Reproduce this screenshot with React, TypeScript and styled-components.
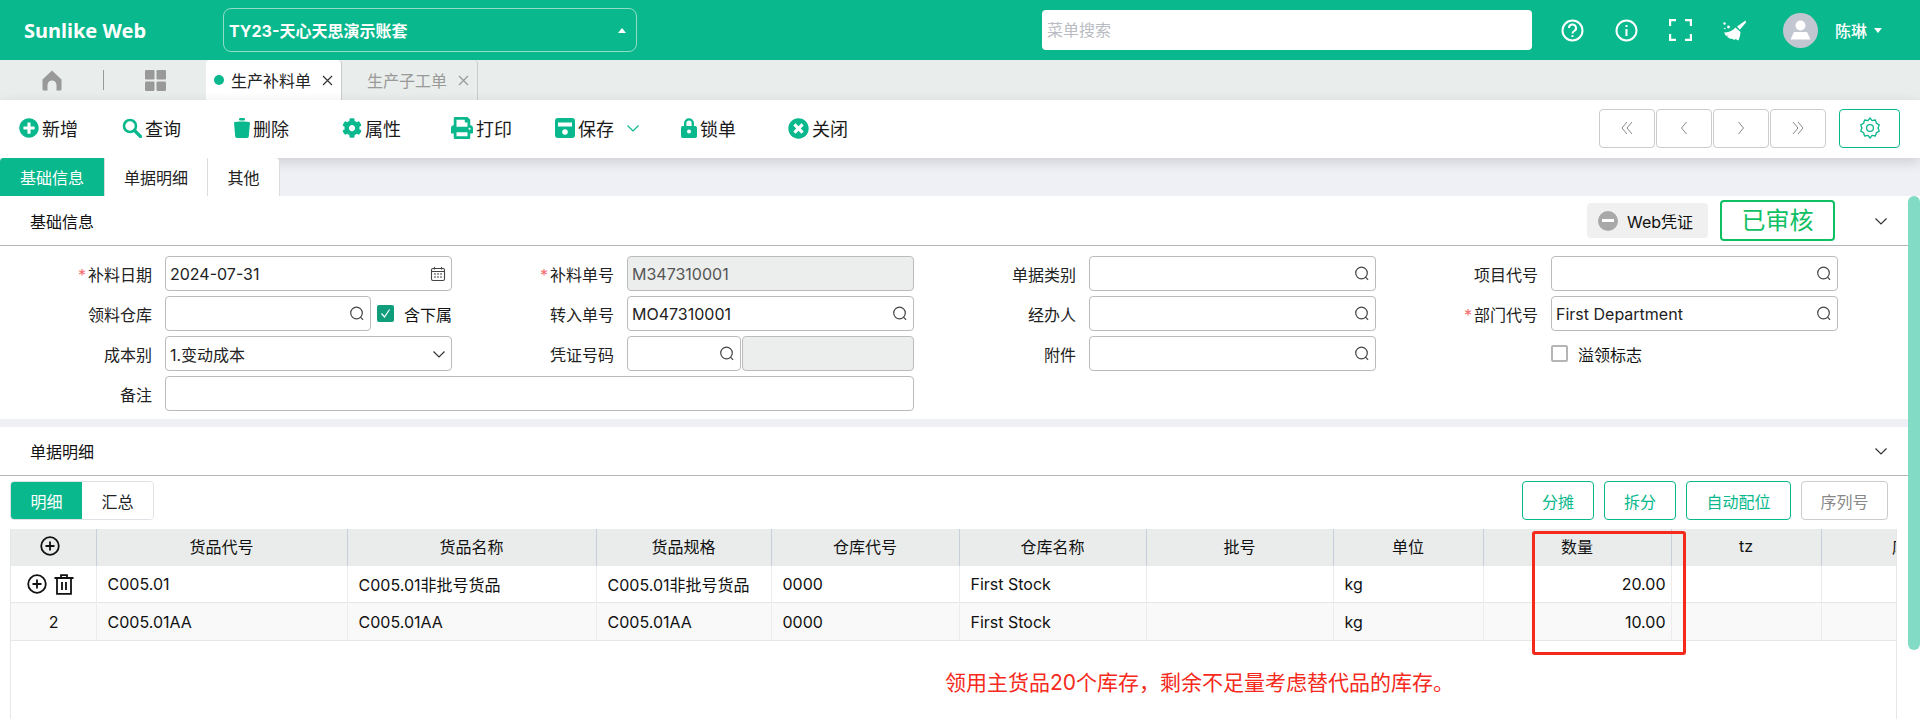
import React from "react";
import styled, { createGlobalStyle } from "styled-components";
import { FaCog, FaPlusCircle, FaPrint, FaTimesCircle } from "react-icons/fa";

const GREEN = "#09b88c";

const GlobalStyles = createGlobalStyle`
  html, body {
    margin: 0;
    padding: 0;
    background: #fff;
  }
  body {
    font-family: Inter, "Noto Sans CJK SC", sans-serif;
    font-size: 16px;
    color: #111;
  }
  * { box-sizing: border-box; }
`;

const Page = styled.div`
  position: relative;
  width: 1920px;
  height: 719px;
  overflow: hidden;
  background: #fff;
`;

const Header = styled.header`
  display: flex;
  align-items: center;
  height: 60px;
  background: ${GREEN};
  color: #fff;
`;

const Logo = styled.div`
  width: 223px;
  padding-left: 24px;
  font-family: "Noto Sans", sans-serif;
  font-size: 20px;
  font-weight: 700;
`;

const CompanySelect = styled.div`
  display: flex;
  align-items: center;
  justify-content: space-between;
  width: 414px;
  height: 44px;
  padding: 0 10px 0 5px;
  border: 1px solid #8fdcc8;
  border-radius: 8px;
  font-weight: 700;
`;

const Caret = styled.span<{ $up?: boolean }>`
  width: 0;
  height: 0;
  border-left: 4px solid transparent;
  border-right: 4px solid transparent;
  ${(p) => (p.$up ? "border-bottom: 5px solid #fff;" : "border-top: 5px solid #fff;")}
`;

const MenuSearch = styled.div`
  width: 490px;
  height: 40px;
  margin-left: 405px;
  padding-left: 5px;
  border-radius: 4px;
  background: #fff;
  color: #b9bcc2;
  line-height: 41px;
`;

const HeaderIcons = styled.div`
  display: flex;
  align-items: center;
  gap: 31px;
  margin-left: 29px;
`;

const HeaderIcon = styled.span`
  display: flex;
  width: 23px;
  height: 23px;
  align-items: center;
  justify-content: center;
`;

const Avatar = styled.span`
  width: 35px;
  height: 35px;
  margin-left: 37px;
  border-radius: 50%;
  background: #c2c6d0;
  overflow: hidden;
`;

const UserName = styled.span`
  margin: 0 7px 0 17px;
  font-size: 16px;
  font-weight: 500;
`;

const TabBar = styled.nav`
  display: flex;
  align-items: stretch;
  height: 40px;
  background: #e9edeb;
`;

const TabShortcut = styled.div`
  display: flex;
  align-items: center;
  width: 206px;
  padding-left: 42px;
`;

const TabDivider = styled.span`
  width: 1px;
  height: 20px;
  margin: 0 41px;
  background: #999;
`;

const PageTab = styled.div<{ $active?: boolean }>`
  display: flex;
  align-items: center;
  width: 136px;
  padding-left: ${(p) => (p.$active ? 8 : 25)}px;
  border-right: 1px solid #c9cccb;
  border-radius: 4px 4px 0 0;
  background: ${(p) => (p.$active ? "#fff" : "transparent")};
  color: ${(p) => (p.$active ? "#222" : "#999")};
`;

const TabDot = styled.span`
  width: 10px;
  height: 10px;
  margin-right: 7px;
  border-radius: 50%;
  background: ${GREEN};
`;

const TabClose = styled.svg`
  margin-left: 11px;
`;

const Toolbar = styled.div`
  position: relative;
  z-index: 1;
  display: flex;
  align-items: center;
  height: 58px;
  padding: 0 20px 2px 19px;
  background: #fff;
  box-shadow: 0 4px 12px rgba(0, 0, 0, 0.14);
`;

const ToolButton = styled.div<{ $width: number }>`
  display: flex;
  align-items: center;
  width: ${(p) => p.$width}px;
  gap: 3px;
  font-size: 18px;
  color: #1a1a1a;
  svg {
    color: ${GREEN};
    flex: none;
  }
`;

const DropMark = styled.span`
  display: flex;
  margin-left: 9px;
`;

const NavGroup = styled.div`
  display: flex;
  align-items: center;
  margin-left: auto;
  gap: 1px;
`;

const NavButton = styled.div`
  display: flex;
  align-items: center;
  justify-content: center;
  width: 56px;
  height: 39px;
  border: 1px solid #ccc;
  border-radius: 4px;
  color: #8a8a8a;
`;

const GearButton = styled.div`
  display: flex;
  align-items: center;
  justify-content: center;
  width: 61px;
  height: 39px;
  margin-left: 13px;
  border: 1px solid ${GREEN};
  border-radius: 4px;
  color: ${GREEN};
`;

const SubTabs = styled.div`
  display: flex;
  height: 38px;
  background: #eff0f5;
`;

const SubTab = styled.div<{ $active?: boolean; $width: number }>`
  position: relative;
  z-index: 2;
  display: flex;
  align-items: center;
  justify-content: center;
  width: ${(p) => p.$width}px;
  border-right: 1px solid #dcdcdc;
  border-radius: ${(p) => (p.$active ? "4px 0 0 0" : "0")};
  background: ${(p) => (p.$active ? GREEN : "#fff")};
  color: ${(p) => (p.$active ? "#fff" : "#222")};
  &:last-child {
    border-radius: 0 4px 0 0;
  }
`;

const SectionHead = styled.div<{ $height: number }>`
  display: flex;
  align-items: center;
  height: ${(p) => p.$height}px;
  padding: 0 32px 0 30px;
  border-bottom: 1px solid #b5b5b5;
  background: #fff;
`;

const SectionActions = styled.div`
  display: flex;
  align-items: center;
  margin-left: auto;
`;

const VoucherButton = styled.div`
  display: flex;
  align-items: center;
  gap: 9px;
  width: 121px;
  height: 35px;
  padding-left: 11px;
  border-radius: 4px;
  background: #f0f0f0;
`;

const VoucherDot = styled.span`
  display: flex;
  align-items: center;
  justify-content: center;
  width: 20px;
  height: 20px;
  border-radius: 50%;
  background: #a8a8a8;
  &::after {
    content: "";
    width: 12px;
    height: 3px;
    background: #fff;
  }
`;

const StatusStamp = styled.div`
  width: 115px;
  height: 41px;
  margin: 0 39px 0 12px;
  border: 2px solid #0fc063;
  border-radius: 4px;
  color: #0fc063;
  font-size: 24px;
  line-height: 37px;
  text-align: center;
`;

const FormGrid = styled.div`
  display: grid;
  grid-template-columns: repeat(4, 153px 287px);
  column-gap: 11px;
  grid-auto-rows: 35px;
  row-gap: 5px;
  padding: 10px 0 8px 1px;
`;

const Label = styled.label<{ $required?: boolean }>`
  align-self: center;
  padding-right: 2px;
  text-align: right;
  color: #222;
  white-space: nowrap;
  ${(p) =>
    p.$required
      ? `&::before { content: "*"; margin-right: 2px; color: #f56c6c; }`
      : ""}
`;

const Field = styled.div<{ $disabled?: boolean; $grow?: boolean }>`
  display: flex;
  align-items: center;
  justify-content: space-between;
  height: 35px;
  padding: 0 5px 0 4px;
  ${(p) => (p.$grow ? "flex: 1;" : "")}
  border: 1px solid #bbb;
  border-radius: 4px;
  background: ${(p) => (p.$disabled ? "#eceeed" : "#fff")};
  color: ${(p) => (p.$disabled ? "#555" : "#222")};
  white-space: nowrap;
`;

const WideField = styled(Field)`
  grid-column: span 3;
`;

const FieldGroup = styled.div`
  display: flex;
  align-items: center;
`;

const Check = styled.span<{ $checked?: boolean }>`
  display: flex;
  flex: none;
  align-items: center;
  justify-content: center;
  width: 17px;
  height: 17px;
  margin-left: ${(p) => (p.$checked ? 6 : 0)}px;
  border-radius: 2px;
  border: ${(p) => (p.$checked ? "none" : "2px solid #b5b5b5")};
  background: ${(p) => (p.$checked ? "#0f9d7c" : "#fff")};
`;

const CheckLabel = styled.span`
  margin-left: 10px;
  white-space: nowrap;
`;

const VoucherCode = styled(Field)`
  width: 114px;
  margin-right: 1px;
`;

const SectionGap = styled.div`
  height: 8px;
  background: #eff0f5;
`;

const DetailBar = styled.div`
  display: flex;
  align-items: flex-start;
  height: 53px;
  padding: 5px 32px 0 10px;
`;

const Segment = styled.div`
  display: flex;
  height: 39px;
  border: 1px solid #dfe1e6;
  border-radius: 4px;
  overflow: hidden;
`;

const SegmentItem = styled.div<{ $active?: boolean }>`
  display: flex;
  align-items: center;
  justify-content: center;
  width: 71px;
  background: ${(p) => (p.$active ? GREEN : "#fff")};
  color: ${(p) => (p.$active ? "#fff" : "#222")};
`;

const DetailActions = styled.div`
  display: flex;
  gap: 10px;
  margin-left: auto;
`;

const OutlineButton = styled.div<{ $muted?: boolean; $width: number }>`
  display: flex;
  align-items: center;
  justify-content: center;
  width: ${(p) => p.$width}px;
  height: 39px;
  border: 1px solid ${(p) => (p.$muted ? "#ccc" : GREEN)};
  border-radius: 4px;
  color: ${(p) => (p.$muted ? "#888" : GREEN)};
`;

const GridWrap = styled.div`
  width: 1887px;
  height: 190px;
  margin-left: 10px;
  border-left: 1px solid #e6e6e6;
  border-right: 1px solid #e6e6e6;
  overflow: hidden;
`;

const Table = styled.table`
  width: 1968px;
  table-layout: fixed;
  border-collapse: collapse;
`;

const HeadCell = styled.th`
  height: 37px;
  padding: 0 0 3px;
  border-right: 1px solid #c8cfdc;
  background: #e9eceb;
  font-weight: 400;
  text-align: center;
  white-space: nowrap;
`;

const AddHead = styled.div`
  display: flex;
  justify-content: center;
  padding-right: 6px;
`;

const Row = styled.tr<{ $striped?: boolean }>`
  background: ${(p) => (p.$striped ? "#f9f9f9" : "#fff")};
  border-bottom: 1px solid #e6e6e6;
`;

const Cell = styled.td<{ $align?: string; $height: number }>`
  height: ${(p) => p.$height}px;
  padding: 1px ${(p) => (p.$align === "right" ? 5 : 10)}px 0 11px;
  border-right: 1px solid #ececec;
  text-align: ${(p) => p.$align || "left"};
  white-space: nowrap;
`;

const RowActions = styled.div`
  display: flex;
  align-items: center;
  justify-content: center;
  gap: 7px;
  margin-left: -7px;
`;

const Highlight = styled.div`
  position: absolute;
  left: 1532px;
  top: 531px;
  width: 154px;
  height: 124px;
  border: 3px solid #f5291c;
  border-radius: 3px;
`;

const Note = styled.div`
  position: absolute;
  left: 945px;
  top: 668px;
  color: #f5291c;
  font-size: 21px;
  line-height: 30px;
  white-space: nowrap;
`;

const ScrollThumb = styled.div`
  position: absolute;
  right: 0;
  top: 196px;
  width: 12px;
  height: 454px;
  border-radius: 6px;
  background: #82dcc5;
`;

const CloseMark = ({ color }: { color: string }) => (
  <TabClose width="11" height="11" viewBox="0 0 11 11" fill="none" stroke={color} strokeWidth="1.2">
    <path d="M1 1l9 9M10 1l-9 9" />
  </TabClose>
);

const SearchIcon = () => (
  <svg width="16" height="16" viewBox="0 0 16 16" fill="none" stroke="#444" strokeWidth="1.2">
    <circle cx="7.5" cy="7" r="5.8" />
    <path d="M11.5 11.2l2.6 2.6" />
  </svg>
);

const CalendarIcon = () => (
  <svg width="16" height="16" viewBox="0 0 16 16" fill="none" stroke="#444" strokeWidth="1.1">
    <rect x="1.5" y="2.5" width="13" height="12" rx="1.5" />
    <path d="M1.5 5.5h13M4.5 1v2.5M11.5 1v2.5" />
    <path d="M4 8h2M7 8h2M10 8h2M4 11h2M7 11h2M10 11h2" />
  </svg>
);

const Chevron = ({ size = 14, color = "#333" }: { size?: number; color?: string }) => (
  <svg width={size} height={size} viewBox="0 0 14 14" fill="none" stroke={color} strokeWidth="1.2">
    <path d="M1.5 4.5L7 10l5.5-5.5" />
  </svg>
);

const HomeIcon = () => (
  <svg width="20" height="21" viewBox="0 0 20 21" fill="#999">
    <path d="M10 0.5L0.5 9.5V19a1.5 1.5 0 0 0 1.5 1.5h3.5V15a4.5 4.5 0 0 1 9 0v5.5H18a1.5 1.5 0 0 0 1.5-1.5V9.5z" />
  </svg>
);

const AppsIcon = () => (
  <svg width="21" height="21" viewBox="0 0 21 21" fill="#999">
    <rect width="9.5" height="9.5" rx="1.2" />
    <rect x="11.5" width="9.5" height="9.5" rx="1.2" />
    <rect y="11.5" width="9.5" height="9.5" rx="1.2" />
    <rect x="11.5" y="11.5" width="9.5" height="9.5" rx="1.2" />
  </svg>
);

const MagnifierIcon = () => (
  <svg width="20" height="20" viewBox="0 0 20 20" fill="none" stroke="currentColor">
    <circle cx="8" cy="8" r="6" strokeWidth="2.6" />
    <path d="M12.500 12.500l6 6" strokeWidth="3.2" strokeLinecap="round" />
  </svg>
);

const TrashIcon = () => (
  <svg width="16" height="20" viewBox="0 0 16 20" fill="currentColor">
    <rect x="5" width="6" height="2.4" rx="1.2" />
    <path d="M0 4.500C2 3.200 14 3.200 16 4.500l-1.200 13.800A1.800 1.800 0 0 1 13 20H3a1.800 1.800 0 0 1-1.800-1.700z" />
  </svg>
);

const SaveIcon = () => (
  <svg width="20" height="20" viewBox="0 0 20 20">
    <rect width="20" height="20" rx="3" fill="currentColor" />
    <rect x="3" y="4.500" width="14" height="4" fill="#fff" />
    <circle cx="10" cy="14" r="2.800" fill="#fff" />
  </svg>
);

const LockIcon = () => (
  <svg width="16" height="20" viewBox="0 0 16 20" fill="currentColor">
    <path
      fillRule="evenodd"
      d="M3 8V5.2a5 5 0 0 1 10 0V8h1.2A1.8 1.8 0 0 1 16 9.800v8.400a1.800 1.800 0 0 1-1.800 1.800H1.800A1.800 1.800 0 0 1 0 18.200V9.800A1.800 1.800 0 0 1 1.800 8zm2.400 0h5.200V5.200a2.600 2.600 0 0 0-5.200 0zM8 11.500a2 2 0 1 0 0 4 2 2 0 0 0 0-4z"
    />
  </svg>
);

const GearOutline = () => (
  <svg width="20" height="22" viewBox="0 0 20 22" fill="none" stroke="currentColor" strokeWidth="1.3" strokeLinejoin="round">
    <path d="M10 1l2 2.600 3.400-.6 1 3.200 2.800 1.700L18 11l1.200 3.100-2.800 1.700-1 3.200-3.400-.6L10 21l-2-2.600-3.400.6-1-3.200-2.800-1.700L2 11 .8 7.900l2.800-1.700 1-3.200 3.400.6z" />
    <circle cx="10" cy="11" r="3.400" />
  </svg>
);

const Pager = ({ d }: { d: string }) => (
  <svg width="16" height="16" viewBox="0 0 16 16" fill="none" stroke="currentColor" strokeWidth="1">
    <path d={d} />
  </svg>
);

const PlusCircleOutline = () => (
  <svg width="20" height="20" viewBox="0 0 20 20" fill="none" stroke="#111" strokeWidth="1.8">
    <circle cx="10" cy="10" r="8.800" />
    <path d="M10 5.500v9M5.500 10h9" />
  </svg>
);

const TrashOutline = () => (
  <svg width="20" height="21" viewBox="0 0 20 21" fill="none" stroke="#111" strokeWidth="1.8">
    <path d="M0.500 4h19M7 4V1.200h6V4M3 4v15.800h14V4" />
    <path d="M8 8v8M12 8v8" />
  </svg>
);

const HelpIcon = () => (
  <svg width="23" height="23" viewBox="0 0 23 23" fill="none" stroke="#fff" strokeWidth="2">
    <circle cx="11.500" cy="11.500" r="10" />
    <path d="M8 9a3.500 3.500 0 1 1 5.200 3c-1.200.7-1.700 1.300-1.700 2.500" />
    <path d="M11.500 16.200v1.800" />
  </svg>
);

const InfoIcon = () => (
  <svg width="23" height="23" viewBox="0 0 23 23" fill="none" stroke="#fff" strokeWidth="2">
    <circle cx="11.500" cy="11.500" r="10" />
    <path d="M11.500 10v7M11.500 6v2" />
  </svg>
);

const FullscreenIcon = () => (
  <svg width="23" height="22" viewBox="0 0 23 22" fill="none" stroke="#fff" strokeWidth="2.200">
    <path d="M1.100 7V1.100H7M16 1.100h5.900V7M21.900 15v5.900H16M7 20.900H1.100V15" />
  </svg>
);

const BroomIcon = () => (
  <svg width="23" height="21" viewBox="0 0 23 21" fill="#fff">
    <path d="M22.500 0.500L14 6.500l2.800 3.200L23 2.500z" />
    <path d="M12.500 7.500l5 4.500-0.500 4-1.500 4.500-3-1.500-1 1-3-1.500-0.500 0.500L4 17l1.500-1.500-2.500 0.500L1 12.500c4.500 0 8.500-1.500 11.500-5z" />
    <circle cx="1.500" cy="3.500" r="1.200" />
    <circle cx="5.500" cy="7" r="1.400" />
    <circle cx="1.800" cy="8.500" r="0.800" />
  </svg>
);

const AvatarFigure = () => (
  <svg width="35" height="35" viewBox="0 0 35 35" fill="#fff">
    <circle cx="17.500" cy="12.500" r="5" />
    <path d="M7.500 26.500l3.500-7.500h13l3.500 7.500z" />
  </svg>
);

const tools = [
  { label: "新增", width: 103, icon: <FaPlusCircle size={20} /> },
  { label: "查询", width: 112, icon: <MagnifierIcon /> },
  { label: "删除", width: 108, icon: <TrashIcon /> },
  { label: "属性", width: 109, icon: <FaCog size={20} /> },
  { label: "打印", width: 104, icon: <FaPrint size={22} /> },
];

const columns = [
  { key: "add", width: 85, title: <AddHead><PlusCircleOutline /></AddHead> },
  { key: "code", width: 251, title: "货品代号" },
  { key: "name", width: 249, title: "货品名称" },
  { key: "spec", width: 175, title: "货品规格" },
  { key: "whCode", width: 188, title: "仓库代号" },
  { key: "whName", width: 187, title: "仓库名称" },
  { key: "batch", width: 187, title: "批号" },
  { key: "unit", width: 150, title: "单位" },
  { key: "qty", width: 188, title: "数量" },
  { key: "tz", width: 150, title: "tz" },
  { key: "stock", width: 158, title: "库" },
];

const rows = [
  { code: "C005.01", name: "C005.01非批号货品", qty: "20.00", height: 36 },
  { code: "C005.01AA", name: "C005.01AA", qty: "10.00", height: 38 },
];

const App: React.FC = () => {
  return (
    <Page>
      <GlobalStyles />
      <Header>
        <Logo>Sunlike Web</Logo>
        <CompanySelect>
          TY23-天心天思演示账套
          <Caret $up />
        </CompanySelect>
        <MenuSearch>菜单搜索</MenuSearch>
        <HeaderIcons>
          <HeaderIcon><HelpIcon /></HeaderIcon>
          <HeaderIcon><InfoIcon /></HeaderIcon>
          <HeaderIcon><FullscreenIcon /></HeaderIcon>
          <HeaderIcon><BroomIcon /></HeaderIcon>
        </HeaderIcons>
        <Avatar><AvatarFigure /></Avatar>
        <UserName>陈琳</UserName>
        <Caret />
      </Header>

      <TabBar>
        <TabShortcut>
          <HomeIcon />
          <TabDivider />
          <AppsIcon />
        </TabShortcut>
        <PageTab $active>
          <TabDot />
          生产补料单
          <CloseMark color="#333" />
        </PageTab>
        <PageTab>
          生产子工单
          <CloseMark color="#999" />
        </PageTab>
      </TabBar>

      <Toolbar>
        {tools.map((t) => (
          <ToolButton key={t.label} $width={t.width}>
            {t.icon}
            <span>{t.label}</span>
          </ToolButton>
        ))}
        <ToolButton $width={126}>
          <SaveIcon />
          <span>保存</span>
          <DropMark><Chevron size={14} color={GREEN} /></DropMark>
        </ToolButton>
        <ToolButton $width={107}>
          <LockIcon />
          <span>锁单</span>
        </ToolButton>
        <ToolButton $width={100}>
          <FaTimesCircle size={21} />
          <span>关闭</span>
        </ToolButton>
        <NavGroup>
          <NavButton><Pager d="M8 2L3 8l5 6M13 2L8 8l5 6" /></NavButton>
          <NavButton><Pager d="M10.500 2l-5 6 5 6" /></NavButton>
          <NavButton><Pager d="M5.500 2l5 6-5 6" /></NavButton>
          <NavButton><Pager d="M3 2l5 6-5 6M8 2l5 6-5 6" /></NavButton>
        </NavGroup>
        <GearButton><GearOutline /></GearButton>
      </Toolbar>

      <SubTabs>
        <SubTab $active $width={105}>基础信息</SubTab>
        <SubTab $width={103}>单据明细</SubTab>
        <SubTab $width={72}>其他</SubTab>
      </SubTabs>

      <SectionHead $height={50}>
        基础信息
        <SectionActions>
          <VoucherButton>
            <VoucherDot />
            Web凭证
          </VoucherButton>
          <StatusStamp>已审核</StatusStamp>
          <Chevron />
        </SectionActions>
      </SectionHead>

      <FormGrid>
        <Label $required>补料日期</Label>
        <Field>2024-07-31<CalendarIcon /></Field>
        <Label $required>补料单号</Label>
        <Field $disabled>M347310001</Field>
        <Label>单据类别</Label>
        <Field><span /><SearchIcon /></Field>
        <Label>项目代号</Label>
        <Field><span /><SearchIcon /></Field>

        <Label>领料仓库</Label>
        <FieldGroup>
          <Field $grow><span /><SearchIcon /></Field>
          <Check $checked>
            <svg width="11" height="11" viewBox="0 0 11 11" fill="none" stroke="#fff" strokeWidth="1.200">
              <path d="M1.500 5.500l3 3.500 5-7.500" />
            </svg>
          </Check>
          <CheckLabel>含下属</CheckLabel>
        </FieldGroup>
        <Label>转入单号</Label>
        <Field>MO47310001<SearchIcon /></Field>
        <Label>经办人</Label>
        <Field><span /><SearchIcon /></Field>
        <Label $required>部门代号</Label>
        <Field>First Department<SearchIcon /></Field>

        <Label>成本别</Label>
        <Field>1.变动成本<Chevron /></Field>
        <Label>凭证号码</Label>
        <FieldGroup>
          <VoucherCode><span /><SearchIcon /></VoucherCode>
          <Field $disabled $grow />
        </FieldGroup>
        <Label>附件</Label>
        <Field><span /><SearchIcon /></Field>
        <span />
        <FieldGroup>
          <Check />
          <CheckLabel>溢领标志</CheckLabel>
        </FieldGroup>

        <Label>备注</Label>
        <WideField />
      </FormGrid>

      <SectionGap />

      <SectionHead $height={49}>
        单据明细
        <SectionActions><Chevron /></SectionActions>
      </SectionHead>

      <DetailBar>
        <Segment>
          <SegmentItem $active>明细</SegmentItem>
          <SegmentItem>汇总</SegmentItem>
        </Segment>
        <DetailActions>
          <OutlineButton $width={72}>分摊</OutlineButton>
          <OutlineButton $width={72}>拆分</OutlineButton>
          <OutlineButton $width={105}>自动配位</OutlineButton>
          <OutlineButton $muted $width={87}>序列号</OutlineButton>
        </DetailActions>
      </DetailBar>

      <GridWrap>
        <Table>
          <colgroup>
            {columns.map((c) => (
              <col key={c.key} width={c.width} />
            ))}
          </colgroup>
          <thead>
            <tr>
              {columns.map((c) => (
                <HeadCell key={c.key}>{c.title}</HeadCell>
              ))}
            </tr>
          </thead>
          <tbody>
            {rows.map((r, i) => (
              <Row key={r.code} $striped={i === 1}>
                <Cell $height={r.height} $align="center">
                  {i === 0 ? (
                    <RowActions>
                      <PlusCircleOutline />
                      <TrashOutline />
                    </RowActions>
                  ) : (
                    i + 1
                  )}
                </Cell>
                <Cell $height={r.height}>{r.code}</Cell>
                <Cell $height={r.height}>{r.name}</Cell>
                <Cell $height={r.height}>{r.name}</Cell>
                <Cell $height={r.height}>0000</Cell>
                <Cell $height={r.height}>First Stock</Cell>
                <Cell $height={r.height} />
                <Cell $height={r.height}>kg</Cell>
                <Cell $height={r.height} $align="right">{r.qty}</Cell>
                <Cell $height={r.height} />
                <Cell $height={r.height} />
              </Row>
            ))}
          </tbody>
        </Table>
      </GridWrap>

      <Highlight />
      <Note>领用主货品20个库存，剩余不足量考虑替代品的库存。</Note>
      <ScrollThumb />
    </Page>
  );
};

export default App;
